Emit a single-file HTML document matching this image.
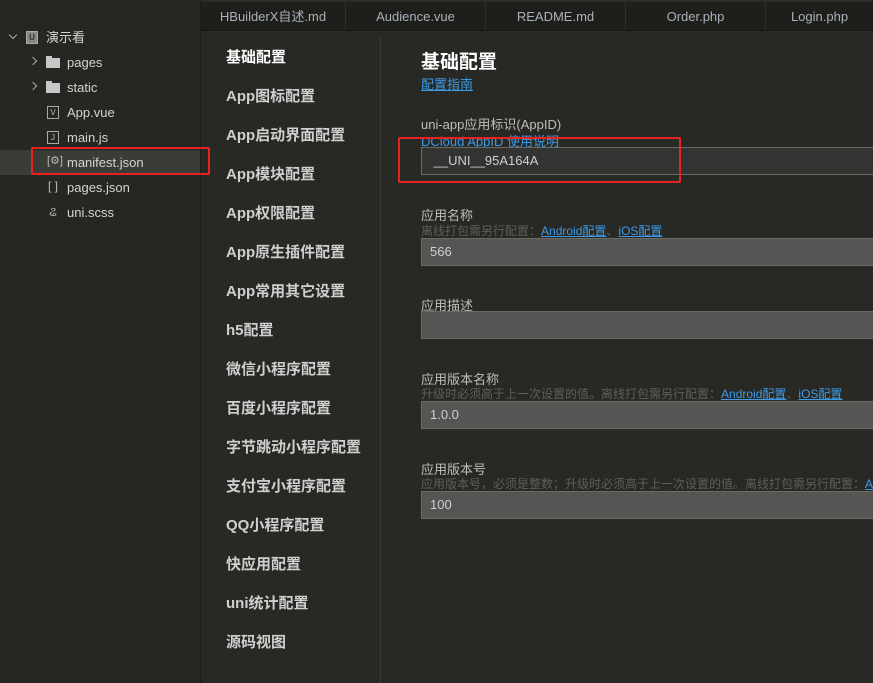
<!DOCTYPE html>
<html><head><meta charset="utf-8"><style>
*{margin:0;padding:0;box-sizing:border-box}
html,body{width:873px;height:683px;overflow:hidden}
body{background:#282824;font-family:"Liberation Sans","Noto Sans CJK SC",sans-serif;position:relative;color:#ccc}
.abs{position:absolute}
#side{left:0;top:0;width:201px;height:683px;background:#262622;border-right:1px solid #1c1c1a}
.it{position:absolute;left:0;width:200px;height:25px;font-size:13px;color:#d4d4d4;line-height:25px}
.it span{position:absolute;left:67px}
.ic{position:absolute;left:47px;top:6px;width:12px;height:13px;border:1px solid #aaa;font-size:8px;line-height:11px;text-align:center;color:#bbb}
.fold{position:absolute;left:46px;top:8px;width:14px;height:10px;background:#c8c8c8}
.fold:before{content:"";position:absolute;left:0;top:-2px;width:6px;height:3px;background:#c8c8c8}
.ch{position:absolute;left:30px;top:8px;width:6px;height:6px;border-right:1.5px solid #aaa;border-bottom:1.5px solid #aaa;transform:rotate(-45deg)}
#tabs{left:201px;top:0;width:672px;height:31px;background:#1e1e1b;border-bottom:1px solid #181816;border-top:2px solid #2c2c28;overflow:hidden}
.tab{position:absolute;top:0;height:29px;line-height:29px;font-size:13px;color:#a9b2ba;text-align:center}
.sep{position:absolute;top:0;width:1px;height:29px;background:#2e2e2a}
.nav{position:absolute;left:226px;font-size:15px;font-weight:bold;color:#cfcfcf}
#main{position:absolute;left:381px;top:32px;width:492px;height:651px;overflow:hidden}
.lbl{position:absolute;left:40px;font-size:13px;color:#bdbdbd}
.hint{position:absolute;left:40px;font-size:12px;color:#5e5e5a;white-space:nowrap}
a{color:#3d9be9;text-decoration:underline}
.inp{position:absolute;left:40px;width:460px;height:28px;background:#555553;border:1px solid #6a6a67;font-size:13px;color:#cfcfcf;line-height:26px;padding-left:8px}
</style></head><body>
<div id="side" class="abs">
 <div class="it" style="top:25px"><div class="ch" style="left:10px;top:7px;transform:rotate(45deg)"></div><div class="ic" style="left:26px;top:6px;background:#888;color:#333;font-weight:bold">U</div><span style="left:46px">演示看</span></div>
 <div class="it" style="top:50px"><div class="ch"></div><div class="fold"></div><span>pages</span></div>
 <div class="it" style="top:75px"><div class="ch"></div><div class="fold"></div><span>static</span></div>
 <div class="it" style="top:100px"><div class="ic">V</div><span>App.vue</span></div>
 <div class="it" style="top:125px"><div class="ic">J</div><span>main.js</span></div>
 <div class="it" style="top:150px;background:#3b3b37"><div class="ic" style="border:none;font-size:11px">[⚙]</div><span>manifest.json</span></div>
 <div class="it" style="top:175px"><div class="ic" style="border:none;font-size:12px">[ ]</div><span>pages.json</span></div>
 <div class="it" style="top:200px"><div class="ic" style="border:none;font-size:13px">ଌ</div><span>uni.scss</span></div>
</div>
<div class="abs" style="left:31px;top:147px;width:179px;height:28px;border:2px solid #e8231f;border-radius:2px"></div>
<div id="tabs" class="abs">
 <div class="tab" style="left:0;width:144px">HBuilderX自述.md</div><div class="sep" style="left:144px"></div>
 <div class="tab" style="left:145px;width:139px">Audience.vue</div><div class="sep" style="left:284px"></div>
 <div class="tab" style="left:285px;width:139px">README.md</div><div class="sep" style="left:424px"></div>
 <div class="tab" style="left:425px;width:139px">Order.php</div><div class="sep" style="left:564px"></div>
 <div class="tab" style="left:565px;width:107px">Login.php</div>
</div>
<div class="abs" style="left:380px;top:36px;width:1px;height:647px;background:#3a3a36"></div>
<div class="nav" style="top:46px;color:#fff">基础配置</div>
<div class="nav" style="top:85px">App图标配置</div>
<div class="nav" style="top:124px">App启动界面配置</div>
<div class="nav" style="top:163px">App模块配置</div>
<div class="nav" style="top:202px">App权限配置</div>
<div class="nav" style="top:241px">App原生插件配置</div>
<div class="nav" style="top:280px">App常用其它设置</div>
<div class="nav" style="top:319px">h5配置</div>
<div class="nav" style="top:358px">微信小程序配置</div>
<div class="nav" style="top:397px">百度小程序配置</div>
<div class="nav" style="top:436px">字节跳动小程序配置</div>
<div class="nav" style="top:475px">支付宝小程序配置</div>
<div class="nav" style="top:514px">QQ小程序配置</div>
<div class="nav" style="top:553px">快应用配置</div>
<div class="nav" style="top:592px">uni统计配置</div>
<div class="nav" style="top:631px">源码视图</div>

<div id="main">
<div class="abs" style="left:40px;top:15px;font-size:19px;font-weight:bold;color:#fff">基础配置</div>
<div class="abs" style="left:40px;top:42px;font-size:13px"><a>配置指南</a></div>
<div class="lbl" style="top:82px">uni-app应用标识(AppID)</div>
<div class="abs" style="left:40px;top:99px;font-size:13px"><a>DCloud AppID 使用说明</a></div>
<div class="inp" style="top:115px;background:#333331">&nbsp;__UNI__95A164A</div>
<div class="abs" style="left:17px;top:105px;width:283px;height:46px;border:2px solid #e8231f;border-radius:2px"></div>

<div class="lbl" style="top:173px">应用名称</div>
<div class="hint" style="top:190px">离线打包需另行配置：<a>Android配置</a>、<a>iOS配置</a></div>
<div class="inp" style="top:206px">566</div>
<div class="lbl" style="top:263px">应用描述</div>
<div class="inp" style="top:279px"></div>
<div class="lbl" style="top:337px">应用版本名称</div>
<div class="hint" style="top:353px">升级时必须高于上一次设置的值。离线打包需另行配置：<a>Android配置</a>、<a>iOS配置</a></div>
<div class="inp" style="top:369px">1.0.0</div>
<div class="lbl" style="top:427px">应用版本号</div>
<div class="hint" style="top:443px">应用版本号，必须是整数；升级时必须高于上一次设置的值。离线打包需另行配置：<a>Android配置</a></div>
<div class="inp" style="top:459px">100</div>
</div>
</body></html>
